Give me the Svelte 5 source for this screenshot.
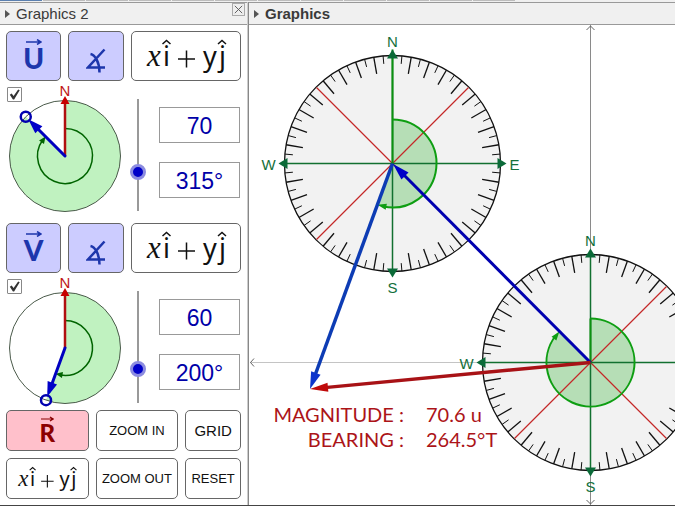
<script>
  const rad = (deg) => (deg * Math.PI) / 180;
  const polar = (cx, cy, r, deg) => [cx + r * Math.sin(rad(deg)), cy - r * Math.cos(rad(deg))];

  function arc(cx, cy, r, to) {
    const [x, y] = polar(cx, cy, r, to);
    return `M${cx} ${cy - r} A${r} ${r} 0 ${to > 180 ? 1 : 0} 1 ${x} ${y}`;
  }
  const sector = (cx, cy, r, to) => `${arc(cx, cy, r, to)} L${cx} ${cy} Z`;

  // Arrow head with its tip at (x, y), pointing along a compass bearing
  function head(x, y, deg, len, half) {
    const [bx, by] = polar(x, y, -len, deg);
    const [ax, ay] = polar(bx, by, half, deg + 90);
    const [cx, cy] = polar(bx, by, half, deg - 90);
    return `${x},${y} ${ax},${ay} ${cx},${cy}`;
  }
  const bearing = (x1, y1, x2, y2) => (Math.atan2(x2 - x1, y1 - y2) * 180) / Math.PI;

  const ticks = [];
  for (let a = 5; a < 360; a += 5) {
    if (a % 45 !== 0) ticks.push({ a, len: a % 10 === 0 ? 17 : 8 });
  }

  const compasses = [
    { x: 392.5, y: 163.5, to: 200, spoke: 114, east: true },
    { x: 590.5, y: 362.5, to: 315, spoke: 44, east: false }
  ];

  const vectors = [
    { from: [392.5, 163.5], to: [310, 389], line: '#0d3cb4', tip: '#0d35cc', w: 3.5, len: 17, half: 5 },
    { from: [590.5, 362.5], to: [393, 164], line: '#0000b0', tip: '#0000c8', w: 3, len: 17, half: 5 },
    { from: [590.5, 362.5], to: [310, 389], line: '#a81216', tip: '#c00a0a', w: 3.5, len: 18, half: 4.5 }
  ];

  let inputs = $state([
    { name: 'U', shown: true, size: 70, angle: 315 },
    { name: 'V', shown: true, size: 60, angle: 200 }
  ]);
</script>

{#snippet components()}
  <svg class="ij" viewBox="0 0 84 38" aria-label="x i plus y j">
    <text class="math" x="3" y="29">x</text>
    <text x="19" y="29">i</text>
    <path d="M34 22H51M42.500 13.500V30.500" />
    <text x="59" y="29">y</text>
    <text x="75" y="29">j</text>
    <path d="M18.500 7L22.500 3.500L26.500 7M74 7L78 3.500L82 7" />
  </svg>
{/snippet}

{#snippet vectorName(name)}
  <span class="vec">
    <svg viewBox="0 0 16 6" aria-hidden="true"><path d="M0 3H14M11 0.5L15 3L11 5.5" /></svg>
    {name}
  </span>
{/snippet}

<div class="app">
  <div class="strip">
    {#each Array(12) as _}<i></i>{/each}
  </div>
  <div class="views">
    <section class="side">
      <header>
        <span class="tri"></span>
        <h2>Graphics 2</h2>
        <button class="close" aria-label="Close view">
          <svg viewBox="0 0 12 12"><path d="M2 2L10 10M10 2L2 10" /></svg>
        </button>
      </header>

      <div class="controls">
        {#each inputs as v}
          <div class="top">
            <button class="blue">{@render vectorName(v.name)}</button>
            <button class="blue" aria-label="Show angle">
              <svg class="angle" viewBox="0 0 20 26">
                <path d="M18.5 1.500L2 19.500H19M4.500 6C9 7 13.500 14 13.500 24.500" />
              </svg>
            </button>
            <button>{@render components()}</button>
          </div>
          <div class="mid">
            <div class="dial">
              <input type="checkbox" bind:checked={v.shown} aria-label="Show vector {v.name}" />
              <svg viewBox="0 -1 118 132">
                <path d={sector(59, 74, 55.5, v.angle)} fill="#c0f2c0" />
                <circle cx="59" cy="74" r="55.5" fill="none" stroke="#4a5a4a" />
                <path d={arc(59, 74, 27.5, v.angle - 10)} fill="none" stroke="#006400" stroke-width="1.5" />
                <polygon
                  points={head(...polar(59, 74, 27.5, v.angle), v.angle + 80, 7, 3)}
                  fill="#006400" />
                <path d="M59 74V18" stroke="#b01010" stroke-width="2.5" />
                <polygon points="59,14 54.5,22 63.5,22" fill="#c80000" />
                <text x="59" y="14">N</text>
                <path
                  d="M59 74L{polar(59, 74, 46, v.angle).join(' ')}"
                  stroke="#0000c0"
                  stroke-width="3"
                  stroke-linecap="round" />
                <polygon points={head(...polar(59, 74, 52, v.angle), v.angle, 15, 5)} fill="#0000c8" />
                <circle
                  cx={polar(59, 74, 55.5, v.angle)[0]}
                  cy={polar(59, 74, 55.5, v.angle)[1]}
                  r="5"
                  fill="none"
                  stroke="#0000b0"
                  stroke-width="2.5" />
              </svg>
            </div>
            <input class="slider" type="range" min="0" max="200" bind:value={v.size} aria-label="Magnitude slider" />
            <div class="fields">
              <input type="text" value={v.size} aria-label="Magnitude" />
              <input type="text" value="{v.angle}°" aria-label="Bearing" />
            </div>
          </div>
        {/each}

        <div class="bottom">
          <button class="pink">{@render vectorName('R')}</button>
          <button>ZOOM IN</button>
          <button class="big">GRID</button>
          <button class="small">{@render components()}</button>
          <button>ZOOM OUT</button>
          <button>RESET</button>
        </div>
      </div>
    </section>

    <section class="main">
      <header>
        <span class="tri"></span>
        <h2><b>Graphics</b></h2>
      </header>
      <svg class="canvas" viewBox="249 25 426 480">
        {#each compasses as c}
          <circle cx={c.x} cy={c.y} r="108" fill="#f2f2f2" />
        {/each}
        <path d="M250 362.500H675" stroke="#c4c4c4" />
        <path d="M590.500 25V505" stroke="#8a8a8a" />
        <path d="M254 358.500L250.500 362.500L254 366.500M586.500 30L590.500 26L594.500 30M586.500 500L590.500 504L594.500 500" fill="none" stroke="#666" />

        {#each compasses as c}
          <circle cx={c.x} cy={c.y} r="108" fill="none" stroke="#111" stroke-width="1.3" />
          {#each ticks as t}
            <path
              d="M{polar(c.x, c.y, 108, t.a).join(' ')}L{polar(c.x, c.y, 108 - t.len, t.a).join(' ')}"
              stroke="#111"
              stroke-width={t.len > 10 ? 1.3 : 1} />
          {/each}
          <path d={sector(c.x, c.y, 44, c.to)} fill="#b6deb6" />
          <path
            d="M{c.x - 76} {c.y - 76}L{c.x + 76} {c.y + 76}M{c.x + 76} {c.y - 76}L{c.x - 76} {c.y + 76}"
            stroke="#c42828"
            stroke-width="1.2" />
          <path d="M{c.x - 108} {c.y}h216M{c.x} {c.y - 108}v216" stroke="#127030" stroke-width="1.5" />
          <path d="M{c.x} {c.y}v{-c.spoke}" stroke="#0c9010" stroke-width="2" />
          <path d={arc(c.x, c.y, 44, c.to - 8)} fill="none" stroke="#0e9e12" stroke-width="2" />
          <polygon points={head(...polar(c.x, c.y, 44, c.to), c.to + 82, 9, 3)} fill="#0e9e12" />
          {#each [0, 90, 180, 270] as d}
            <polygon points={head(...polar(c.x, c.y, 114, d), d, 9, 5.5)} fill="#0b6a38" />
          {/each}
          <g class="points">
            <text x={c.x} y={c.y - 117}>N</text>
            <text x={c.x} y={c.y + 129}>S</text>
            <text x={c.x - 124} y={c.y + 6}>W</text>
            {#if c.east}<text x={c.x + 122} y={c.y + 6}>E</text>{/if}
          </g>
        {/each}

        {#each vectors as v}
          {@const b = bearing(...v.from, ...v.to)}
          <path
            d="M{v.from.join(' ')}L{polar(...v.to, -12, b).join(' ')}"
            stroke={v.line}
            stroke-width={v.w} />
          <polygon points={head(...v.to, b, v.len, v.half)} fill={v.tip} />
        {/each}

        <g class="result">
          <text class="end" x="404" y="422">MAGNITUDE :</text>
          <text x="426" y="422">70.6 u</text>
          <text class="end" x="404" y="447">BEARING :</text>
          <text x="426" y="447">264.5°T</text>
        </g>
      </svg>
    </section>
  </div>
</div>

<style>
  .app {
    font-family: 'Liberation Sans', Arial, sans-serif;
    background: #fff;
    color: #222;
    border-bottom: 1px solid #444;
    overflow: hidden;
  }
  .strip {
    display: flex;
    gap: 1px;
    box-sizing: border-box;
    height: 2px;
    padding-bottom: 1px;
    background: #f0f0f0;
  }
  .strip i {
    width: 42px;
    background: #bdbdbd;
  }
  .strip i:first-child {
    background: #5b80b0;
  }
  .views {
    display: flex;
    align-items: stretch;
  }
  .side {
    flex: 0 0 248px;
    box-sizing: border-box;
    border-right: 1px solid #ccc;
    display: flex;
    flex-direction: column;
  }
  .main {
    flex: 1;
    min-width: 0;
    border-left: 1px solid #888;
  }
  header {
    display: flex;
    align-items: center;
    box-sizing: border-box;
    height: 23px;
    padding-left: 5px;
    gap: 6px;
    background: #f0f0f0;
    border-top: 1px solid #999;
    border-bottom: 1px solid #999;
  }
  h2 {
    flex: 1;
    margin: 0;
    font-size: 15px;
    font-weight: 400;
    color: #3a3a3a;
  }
  .tri {
    border: 4px solid transparent;
    border-left: 5px solid #555;
    border-right: 0;
  }
  .close {
    align-self: flex-start;
    width: 13px;
    height: 13px;
    margin-right: 2px;
    border: 1px solid #aaa;
    border-radius: 0;
    background: #eee;
  }
  .close svg {
    display: block;
    stroke: #555;
  }
  .controls {
    padding: 6px 6px 5px;
  }
  button {
    display: flex;
    align-items: center;
    justify-content: center;
    min-width: 0;
    padding: 0;
    border: 1px solid #666;
    border-radius: 5px;
    background: #fff;
    color: #111;
    font: 13px 'Liberation Sans', Arial, sans-serif;
    white-space: nowrap;
  }
  .blue {
    background: #ccf;
    color: #1d36ac;
  }
  .pink {
    background: #ffc0cb;
    color: #8b0000;
  }
  .top {
    display: grid;
    grid-template-columns: 1fr 1fr 2fr;
    grid-auto-rows: 50px;
    gap: 7px;
  }
  .vec {
    display: flex;
    flex-direction: column;
    align-items: center;
    gap: 1px;
    padding-bottom: 3px;
    font: 900 28px/24px Lato, sans-serif;
  }
  .vec svg {
    width: 16px;
    height: 6px;
    fill: none;
    stroke: currentColor;
    stroke-width: 1.5;
  }
  .pink .vec {
    font-size: 24px;
    line-height: 20px;
  }
  .pink .vec svg {
    width: 13px;
  }
  .angle {
    width: 20px;
    height: 26px;
    margin-top: 10px;
    fill: none;
    stroke: currentColor;
    stroke-width: 2.5;
  }
  .ij {
    width: 84px;
    height: 38px;
    fill: none;
    stroke: #111;
    stroke-width: 1.5;
  }
  .ij text {
    fill: #111;
    stroke: none;
    font: 27px 'Noto Sans', sans-serif;
  }
  .ij .math {
    font: italic 31px 'Liberation Serif', serif;
  }
  .small .ij {
    width: 62px;
    height: 28px;
  }
  .mid {
    display: flex;
    height: 142px;
  }
  .dial {
    position: relative;
    width: 118px;
  }
  .dial svg {
    display: block;
    width: 118px;
    height: 132px;
    overflow: visible;
  }
  .dial text {
    fill: #c01818;
    font-size: 15px;
    text-anchor: middle;
  }
  input[type='checkbox'] {
    position: absolute;
    left: 1px;
    top: 6px;
    appearance: none;
    display: grid;
    width: 15px;
    height: 15px;
    margin: 0;
    border: 1px solid #888;
    border-radius: 1px;
    background: #fff;
  }
  input[type='checkbox']:checked::before {
    content: '';
    background: #333;
    clip-path: polygon(14% 52%, 28% 42%, 43% 62%, 78% 12%, 90% 18%, 47% 88%, 38% 88%);
  }
  .slider {
    appearance: none;
    writing-mode: vertical-lr;
    direction: rtl;
    width: 16px;
    height: 128px;
    margin: 10px 0 0 6px;
    background: linear-gradient(#999, #999) center / 2px 112px no-repeat;
  }
  .slider::-webkit-slider-thumb {
    appearance: none;
    box-sizing: border-box;
    width: 16px;
    height: 16px;
    border: 3px solid #8c8ce0;
    border-radius: 50%;
    background: #0000c8;
  }
  .fields {
    flex: 1;
    min-width: 0;
    display: flex;
    flex-direction: column;
    gap: 19px;
    padding: 26px 1px 0 13px;
  }
  .fields input {
    box-sizing: border-box;
    width: 100%;
    height: 36px;
    padding: 2px 0 0;
    border: 1px solid #999;
    background: #fff;
    color: #0000a8;
    font: 23px 'Liberation Sans', Arial, sans-serif;
    text-align: center;
  }
  .bottom {
    display: grid;
    grid-template-columns: 83fr 83fr 56fr;
    grid-auto-rows: 41px;
    gap: 7px;
    margin-top: -5px;
  }
  .bottom .big {
    font-size: 15px;
  }
  .canvas {
    display: block;
    width: 100%;
  }
  .points {
    fill: #14703c;
    font-size: 15px;
    text-anchor: middle;
  }
  .result {
    fill: #ac1418;
    font: 20px Lato, sans-serif;
  }
  .end {
    text-anchor: end;
  }
</style>
